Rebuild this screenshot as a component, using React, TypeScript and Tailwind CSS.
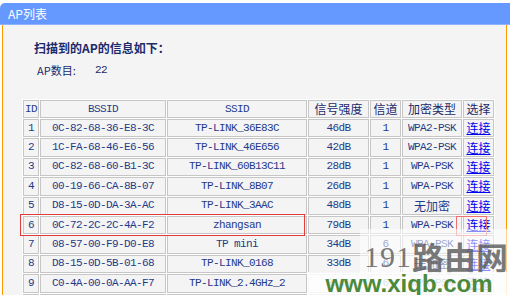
import React from 'react';

type Row = {
  id: string;
  bssid: string;
  ssid: string;
  signal: string;
  channel: string;
  enc: string;
};

const rows: Row[] = [
  { id: '1', bssid: '0C-82-68-36-E8-3C', ssid: 'TP-LINK_36E83C', signal: '46dB', channel: '1', enc: 'WPA2-PSK' },
  { id: '2', bssid: '1C-FA-68-46-E6-56', ssid: 'TP-LINK_46E656', signal: '42dB', channel: '1', enc: 'WPA2-PSK' },
  { id: '3', bssid: '0C-82-68-60-B1-3C', ssid: 'TP-LINK_60B13C11', signal: '28dB', channel: '1', enc: 'WPA-PSK' },
  { id: '4', bssid: '00-19-66-CA-8B-07', ssid: 'TP-LINK_8B07', signal: '26dB', channel: '1', enc: 'WPA-PSK' },
  { id: '5', bssid: 'D8-15-0D-DA-3A-AC', ssid: 'TP-LINK_3AAC', signal: '48dB', channel: '1', enc: '无加密' },
  { id: '6', bssid: '0C-72-2C-2C-4A-F2', ssid: 'zhangsan', signal: '79dB', channel: '1', enc: 'WPA-PSK' },
  { id: '7', bssid: '08-57-00-F9-D0-E8', ssid: 'TP mini', signal: '34dB', channel: '6', enc: 'WPA-PSK' },
  { id: '8', bssid: 'D8-15-0D-5B-01-68', ssid: 'TP-LINK_0168', signal: '33dB', channel: '6', enc: '无加密' },
  { id: '9', bssid: 'C0-4A-00-0A-AA-F7', ssid: 'TP-LINK_2.4GHz_2', signal: '31dB', channel: '6', enc: 'WPA-PSK' },
];

const mono = "font-['Liberation_Mono','DejaVu_Sans_Mono',monospace] text-[11px] tracking-[-0.6px]";
const cjk = "font-['Noto_Sans_CJK_SC','Noto_Sans',sans-serif]";
const cell = 'border border-[#c6c6c6] text-center align-middle p-0 leading-none';

const App: React.FC = () => {
  return (
    <div className="relative w-[510px] h-[295px] overflow-hidden bg-white">
      {/* header bar */}
      <div className="mt-[3px] h-[22px] bg-[#6699ff] rounded-tl-[5px] flex items-center pl-[8px] border-b border-[#8fb3ff]">
        <span className={`${cjk} text-[12px] text-white`}>AP列表</span>
      </div>

      {/* body panel */}
      <div className="ml-[2px] w-[505px] h-[275px] bg-[#f4f4f4] border-l border-r border-[#ff9900]">
        <div className={`${cjk} pl-[31px] pt-[17px] h-[29px] text-[12px] font-semibold text-[#1b2a6b] leading-[12px]`}>
          扫描到的AP的信息如下：
        </div>
        <div className={`${cjk} pl-[34px] pt-[11px] h-[22px] text-[11px] text-[#1b2a6b] leading-[11px] flex`}>
          <span className="w-[58px]">AP数目:</span>
          <span className={mono}>22</span>
        </div>

        <table className="ml-[19px] mt-[23px] w-[465px] table-fixed border-separate border-spacing-px bg-white text-[#1f3a8a]">
          <colgroup>
            <col className="w-[16px]" />
            <col className="w-[126px]" />
            <col className="w-[140px]" />
            <col className="w-[61px]" />
            <col className="w-[31px]" />
            <col className="w-[60px]" />
            <col className="w-[31px]" />
          </colgroup>
          <thead>
            <tr className="h-[18px] bg-[#f4f4f4]">
              <th className={`${cell} ${mono} font-normal`}>ID</th>
              <th className={`${cell} ${mono} font-normal`}>BSSID</th>
              <th className={`${cell} ${mono} font-normal`}>SSID</th>
              <th className={`${cell} ${cjk} text-[12px] font-normal text-[#1b2a6b]`}>信号强度</th>
              <th className={`${cell} ${cjk} text-[12px] font-normal text-[#1b2a6b]`}>信道</th>
              <th className={`${cell} ${cjk} text-[12px] font-normal text-[#1b2a6b]`}>加密类型</th>
              <th className={`${cell} ${cjk} text-[12px] font-normal text-[#1b2a6b]`}>选择</th>
            </tr>
          </thead>
          <tbody>
            {rows.map((r) => (
              <tr key={r.id} className="h-[18.4px] bg-[#f4f4f4]">
                <td className={`${cell} ${mono}`}>{r.id}</td>
                <td className={`${cell} ${mono}`}>{r.bssid}</td>
                <td className={`${cell} ${mono}`}>{r.ssid}</td>
                <td className={`${cell} ${mono}`}>{r.signal}</td>
                <td className={`${cell} ${mono}`}>{r.channel}</td>
                <td className={`${cell} ${r.enc === '无加密' ? `${cjk} text-[12px]` : mono}`}>{r.enc}</td>
                <td className={`${cell} ${cjk} text-[12px]`}>
                  <a href="#" className="text-[#0000ee] underline">连接</a>
                </td>
              </tr>
            ))}
            {/* next row, only its top edge shows */}
            <tr className="h-[18.4px] bg-[#f4f4f4]">
              <td className={cell} />
              <td className={cell} />
              <td className={cell} />
              <td className={cell} />
              <td className={cell} />
              <td className={cell} />
              <td className={cell} />
            </tr>
          </tbody>
        </table>
      </div>

      {/* highlight boxes */}
      <div className="absolute left-[20px] top-[214px] w-[285px] h-[22px] border border-[#e23b3b]" />
      <div className="absolute left-[456px] top-[216px] w-[31px] h-[20px] border border-[#f07070]" />

      {/* watermark */}
      <div className="absolute left-[360px] top-[229px] w-[150px] h-[44px] bg-white/55 flex items-end pl-[4px] pb-[1px]">
        <span className="font-['Liberation_Serif',serif] text-[30px] leading-none text-[#555]/80 tracking-[1px]">191</span>
        <span className={`${cjk} text-[32px] leading-none text-[#555]/80 font-bold`}>路由网</span>
      </div>
      <div className="absolute left-[308px] top-[272px] w-[202px] h-[23px] bg-white/85 flex items-center justify-center">
        <span className="font-['Liberation_Sans',sans-serif] text-[24px] font-bold text-[#4b8a3b] leading-none">www.xiqb.com</span>
      </div>
    </div>
  );
};

export default App;
